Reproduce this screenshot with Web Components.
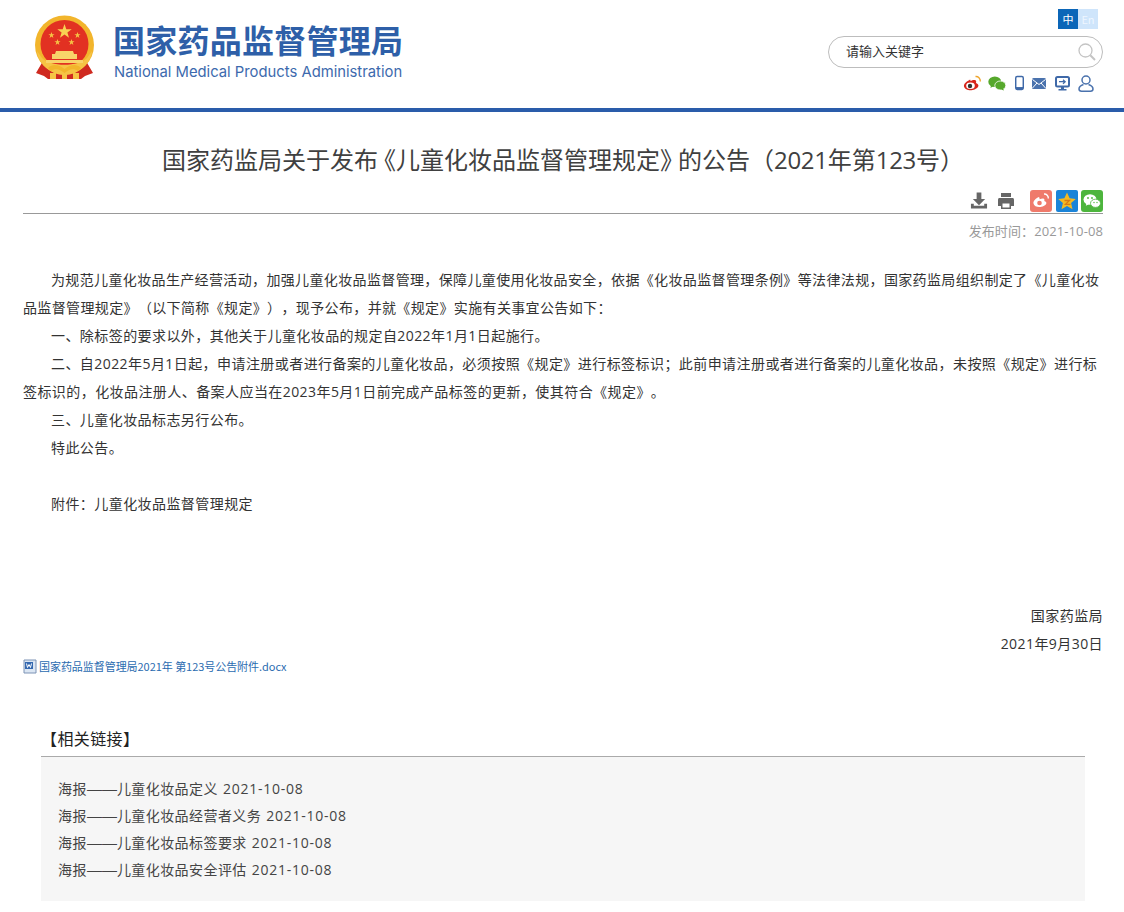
<!DOCTYPE html>
<html lang="zh"><head><meta charset="utf-8"><title>公告</title>
<style>
html,body{margin:0;padding:0;background:#fff;font-family:"Noto Sans CJK SC","Liberation Sans",sans-serif;}
body{overflow:hidden;height:912px}
.lb{font-feature-settings:"halt";padding-left:6px}
.rb{font-feature-settings:"halt";padding-right:6px}
.num{font-family:"Open Sans","Noto Sans CJK SC",sans-serif;letter-spacing:-.3px}
</style></head><body>
<nmpa-header></nmpa-header>
<nmpa-article>
  <span slot="title">国家药监局关于发布<span class="lb">《</span>儿童化妆品监督管理规定<span class="rb">》</span>的公告（<span class="num">2021</span>年第<span class="num">123</span>号）</span>
  <span slot="date">发布时间：2021-10-08</span>
</nmpa-article>
<script>
const hdr=`<style>
:host{display:block;height:108px;border-bottom:4px solid #2a5caa;box-sizing:content-box;position:relative}
.wrap{display:flex;justify-content:space-between;height:108px;padding:0 21px 0 34px;box-sizing:border-box}
.logo{display:flex;gap:18px;padding-top:15px;align-items:flex-start}
.names{display:flex;flex-direction:column;padding-top:5px}
.cn{font:700 32px/38px "Noto Sans CJK SC",sans-serif;color:#2e5fa8;white-space:nowrap;height:38px;letter-spacing:.25px}
.en{font:400 14.8px/18px Inter,"Noto Sans",sans-serif;color:#3c69ad;white-space:nowrap;margin-top:5px;margin-left:1px}
.right{display:flex;flex-direction:column;align-items:flex-end;width:275px}
.lang{display:flex;margin:9px 5px 0 0;height:20px;font:11px/20px "Noto Sans CJK SC",sans-serif}
.lang b{font-weight:400;width:20px;text-align:center;background:#0b66b8;color:#fff}
.lang i{font-style:normal;width:20px;text-align:center;background:#cfe5fb;color:#eef6ff}
.search{width:275px;height:32px;box-sizing:border-box;border:1px solid #bdbdbd;border-radius:16px;margin-top:7px;display:flex;align-items:center;justify-content:space-between;padding:0 6px 0 17px;font:13px/28px "Noto Sans CJK SC",sans-serif;color:#333}
.search span{padding-bottom:2px}
.tools{display:flex;gap:6px;align-items:center;margin-top:5px;height:20px;padding-right:9px}
svg{display:block}
</style>
<div class="wrap">
<div class="logo">
<svg width="61" height="65" viewBox="0 0 61 65">
<path d="M9 46 L2 58 L10 61 L14 64 L47 64 L51 61 L59 58 L52 46Z" fill="#cf2a20"/>
<circle cx="30.500" cy="30" r="29.500" fill="#f2b52c"/>
<circle cx="30.500" cy="29" r="24" fill="#e23122"/>
<path d="M8 43 C16 52 45 52 53 43 L58 36 C57 48 45 60 30.500 60 C16 60 4 48 3 36Z" fill="#f6c445"/>
<path d="M30.500 9l1.800 5.200h5.400l-4.300 3.300 1.600 5.200-4.500-3.100-4.500 3.100 1.600-5.200-4.300-3.300h5.400z" fill="#f8d253"/>
<path d="M17.500 17l.8 2.200h2.300l-1.900 1.400.7 2.300-1.900-1.300-1.900 1.300.7-2.300-1.900-1.400h2.300zM43.500 17l.8 2.200h2.300l-1.900 1.400.7 2.300-1.900-1.300-1.900 1.300.7-2.300-1.900-1.400h2.300zM23.500 24l.8 2.200h2.300l-1.900 1.400.7 2.300-1.900-1.300-1.900 1.300.7-2.300-1.900-1.400h2.300zM37.500 24l.8 2.200h2.300l-1.900 1.400.7 2.300-1.900-1.300-1.900 1.300.7-2.300-1.900-1.400h2.300z" fill="#f6c445"/>
<path d="M22 36h17l1 3h3v5H18v-5h3zM12 45h37v3H12z" fill="#f8d46a"/>
<path d="M14 53c5-5 11-3 16.500 1 5.500-4 11.500-6 16.500-1l-3 3c-4-3-9-2-13.500 2-4.500-4-9.500-5-13.500-2z" fill="#f2b52c"/>
<path d="M16 58h6v6h-6zM28 58h5v6h-5zM39 58h6v6h-6z" fill="#f6c445"/>
</svg>
<div class="names"><div class="cn">国家药品监督管理局</div><div class="en">National Medical Products Administration</div></div>
</div>
<div class="right">
<div class="lang"><b>中</b><i>En</i></div>
<div class="search"><span>请输入关键字</span>
<svg width="18" height="18" viewBox="0 0 18 18" fill="none" stroke="#c4c4c4"><circle cx="7.500" cy="7.500" r="6.500" stroke-width="1.300"/><path d="M12.300 12.300 L17 17" stroke-width="2"/></svg></div>
<div class="tools">
<svg width="19" height="16" viewBox="0 0 19 16"><path d="M7.500 4.500C3.500 6 .5 9 1 11.500c.6 3 5 4.200 8.500 3.500 3.800-.8 6.500-3 5.800-5-.4-1.200-1.700-1.500-2.400-1.900.7-1.600.2-2.800-1.200-3-1.300-.2-3 .5-4.200 1.100.3-1.300-.4-2-2-1.200z" fill="#d8261c"/><ellipse cx="7.500" cy="10.800" rx="4.300" ry="3.200" fill="#fff"/><circle cx="7" cy="11" r="2.200" fill="#333"/><path d="M12.500 1.500c2.700-.3 5 1.700 4.800 5" fill="none" stroke="#efa52c" stroke-width="1.400"/></svg>
<svg width="18" height="15" viewBox="0 0 18 15"><ellipse cx="6.800" cy="5.800" rx="6.500" ry="5.300" fill="#56a82c"/><path d="M3 9l-.5 3 3-2z" fill="#56a82c"/><ellipse cx="12.300" cy="9.500" rx="5.500" ry="4.500" fill="#56a82c" stroke="#fff" stroke-width=".8"/><path d="M15 12.500l1 2-3-1z" fill="#56a82c"/></svg>
<svg width="9" height="16" viewBox="0 0 10 16" style="margin-left:3px"><rect x=".8" y=".8" width="8.400" height="14.400" rx="1.600" fill="none" stroke="#3f69a8" stroke-width="1.600"/><path d="M1 12.500h8V15H1z" fill="#3f69a8"/></svg>
<svg width="14" height="11" viewBox="0 0 14 11" style="margin-left:2px"><rect width="14" height="11" rx="1.500" fill="#4a72ad"/><path d="M.5 1.500L7 6.500l6.500-5M.5 10l4.500-5M13.500 10L9 5" fill="none" stroke="#fff"/></svg>
<svg width="15" height="15" viewBox="0 0 15 15" style="margin-left:3px"><rect x="1" y="1" width="13" height="9.500" rx="1.500" fill="none" stroke="#3f69a8" stroke-width="2"/><path d="M4 5.700h6M8 3.700l2.200 2-2.200 2" fill="none" stroke="#3f69a8" stroke-width="1.200"/><path d="M6 10h3v3h2.500v1.500h-8V13H6z" fill="#3f69a8"/></svg>
<svg width="16" height="17" viewBox="0 0 16 17" fill="none" stroke="#4a72ad" stroke-width="1.500" style="margin-left:2px"><circle cx="8" cy="5" r="4"/><path d="M5.500 9.500C2.500 10.500 1 12 1 14c0 1.500 1 2.200 2.500 2.200h9c1.500 0 2.500-.7 2.500-2.200 0-2-1.500-3.500-4.500-4.500"/></svg>
</div></div></div>`;
class H extends HTMLElement{constructor(){super();this.attachShadow({mode:'open'}).innerHTML=hdr}}
customElements.define('nmpa-header',H);

const art=`<style>
:host{display:block;padding:0 21px 0 23px;color:#333;font-family:"Noto Sans CJK SC",sans-serif;text-spacing-trim:space-all}
h1{margin:0;padding-top:31px;height:70px;font:400 24px/32px "Noto Sans CJK SC",sans-serif;text-align:center;color:#404040;text-spacing-trim:space-all}
.bar{display:flex;justify-content:flex-end;align-items:center;height:25px;padding-top:8px;margin-top:-33px;border-bottom:1px solid #999}
.ic{display:flex;gap:6px;align-items:center}
.date{text-align:right;font-family:"Open Sans","Noto Sans CJK SC",sans-serif;font-size:13px;letter-spacing:.1px;line-height:34px;color:#999;height:35px}
.body{padding-top:17px;font-family:"Open Sans","Noto Sans CJK SC",sans-serif;font-size:14px;letter-spacing:.43px;line-height:28px;color:#333}
.p{margin:0;text-indent:2em;text-align:left}
.first{letter-spacing:.36px}
.r{text-align:right;margin:0}
.file{display:flex;align-items:center;gap:2px;font-size:11px;line-height:16px;color:#2a6bb0;height:16px;letter-spacing:-.05px}
.rel{margin:0 18px;padding-top:49px}
.rel h2{margin:0;font:400 16px/30px "Noto Sans CJK SC",sans-serif;letter-spacing:.4px;color:#222;height:33px;border-bottom:1px solid #aaa}
.list{background:#f6f6f6;padding:18px 18px 18px 17px;font-family:"Open Sans","Noto Sans CJK SC",sans-serif;font-size:14px;letter-spacing:.43px;line-height:27px;color:#444}
.d{font-family:"Liberation Sans",sans-serif;font-size:15px;letter-spacing:0}
.t{letter-spacing:.75px;margin-left:1px}
svg{display:block}
</style>
<h1><slot name="title"></slot></h1>
<div class="bar"><div class="ic">
<svg width="18" height="19" viewBox="0 0 19 19" style="margin-right:3px"><path d="M7 1h5v7h4l-6.500 6.500L3 8h4z" fill="#666"/><path d="M1 13h3v2h11v-2h3v5H1z" fill="#666"/></svg>
<svg width="18" height="18" viewBox="0 0 18 18" style="margin-right:9px"><path d="M4 1h10v4H4z" fill="#666"/><path d="M2 6h14a2 2 0 0 1 1 2v6h-3v3H4v-3H1V8a2 2 0 0 1 1-2z" fill="#666"/><path d="M5.500 11.500h7v4h-7z" fill="#fff"/></svg>
<svg width="22" height="22" viewBox="0 0 22 22" style="margin-right:-2px"><rect width="22" height="22" rx="3" fill="#ef7a6b"/><path d="M9 7c-3.500 1.500-6 4-5.500 6.500.5 3 4.500 4 8 3.300 3.200-.7 5.300-2.500 4.800-4.300-.3-1-1.400-1.200-2-1.500.5-1.500 0-2.500-1.200-2.600-1-.1-2.300.3-3.500.9.200-1.200-.6-2.300-.6-2.300z" fill="#fff"/><circle cx="9.500" cy="13" r="2.300" fill="#ef7a6b"/><path d="M14 4c2.500-.2 4.600 1.800 4.300 4.500" fill="none" stroke="#fff" stroke-width="1.400"/></svg>
<svg width="22" height="22" viewBox="0 0 22 22" style="margin-right:-3px"><rect width="22" height="22" rx="2" fill="#1b84d8"/><path d="M11 2.500l2.600 5.800 6.200.6-4.700 4.200 1.400 6.200L11 16.100l-5.500 3.200 1.400-6.200L2.200 8.900l6.200-.6z" fill="#f5b921"/><path d="M8.500 10.500h5l-4 3.800h5" fill="none" stroke="#d97a14" stroke-width="1.300"/></svg>
<svg width="22" height="22" viewBox="0 0 22 22"><rect width="22" height="22" rx="3" fill="#4db53d"/><ellipse cx="9" cy="9.500" rx="6.500" ry="5.300" fill="#fff"/><path d="M5.500 13l-.7 2.700 3-1.500z" fill="#fff"/><ellipse cx="14.500" cy="13.300" rx="5" ry="4.100" fill="#fff" stroke="#4db53d" stroke-width=".8"/><circle cx="7" cy="8" r=".9" fill="#4db53d"/><circle cx="11" cy="8" r=".9" fill="#4db53d"/><circle cx="13" cy="12.500" r=".7" fill="#4db53d"/><circle cx="16" cy="12.500" r=".7" fill="#4db53d"/></svg>
</div></div>
<div class="date"><slot name="date"></slot></div>
<div class="body">
<div class="p first">为规范儿童化妆品生产经营活动，加强儿童化妆品监督管理，保障儿童使用化妆品安全，依据《化妆品监督管理条例》等法律法规，国家药监局组织制定了《儿童化妆品监督管理规定》（以下简称《规定》），现予公布，并就《规定》实施有关事宜公告如下：</div>
<div class="p">一、除标签的要求以外，其他关于儿童化妆品的规定自2022年1月1日起施行。</div>
<div class="p">二、自2022年5月1日起，申请注册或者进行备案的儿童化妆品，必须按照《规定》进行标签标识；此前申请注册或者进行备案的儿童化妆品，未按照《规定》进行标签标识的，化妆品注册人、备案人应当在2023年5月1日前完成产品标签的更新，使其符合《规定》。</div>
<div class="p">三、儿童化妆品标志另行公布。</div>
<div class="p">特此公告。</div>
<div class="p">&nbsp;</div>
<div class="p">附件：儿童化妆品监督管理规定</div>
<div class="p">&nbsp;</div><div class="p">&nbsp;</div><div class="p">&nbsp;</div>
<div class="r">国家药监局</div>
<div class="r">2021年9月30日</div>
</div>
<div class="file"><svg width="14" height="15" viewBox="0 0 14 15"><path d="M1 1h12v13H1z" fill="#dbe6f3" stroke="#7d93b5"/><path d="M2 3h8v7H2z" fill="#3468b0"/><path d="M3.500 4.500l1 4 1.500-3 1.500 3 1-4" fill="none" stroke="#fff"/></svg><span>国家药品监督管理局2021年 第123号公告附件.docx</span></div>
<div class="rel"><h2>【相关链接】</h2>
<div class="list">
<div>海报<span class="d">——</span>儿童化妆品定义 <span class="t">2021-10-08</span></div>
<div>海报<span class="d">——</span>儿童化妆品经营者义务 <span class="t">2021-10-08</span></div>
<div>海报<span class="d">——</span>儿童化妆品标签要求 <span class="t">2021-10-08</span></div>
<div>海报<span class="d">——</span>儿童化妆品安全评估 <span class="t">2021-10-08</span></div>
</div></div>`;
class A extends HTMLElement{constructor(){super();this.attachShadow({mode:'open'}).innerHTML=art}}
customElements.define('nmpa-article',A);
</script>
</body></html>
